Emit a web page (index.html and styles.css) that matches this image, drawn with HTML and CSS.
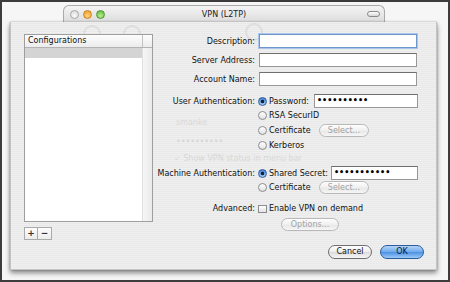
FILE: index.html
```html
<!DOCTYPE html>
<html lang="en">
<head>
    <meta charset="UTF-8">
    <title>VPN (L2TP)</title>
    <link rel="stylesheet" href="styles.css">
</head>
<body>
<div class="screen">

    <div class="titlebar">
        <div class="lights">
            <span class="light light-close"></span>
            <span class="light light-min"></span>
            <span class="light light-zoom"></span>
        </div>
        <div class="title">VPN (L2TP)</div>
        <span class="toolbar-pill"></span>
    </div>

    <div class="sheet">
        <!-- parent window content showing through the sheet -->
        <div class="ghost">
            <span class="ghost-icon ghost-icon-1"></span>
            <span class="ghost-icon ghost-icon-2"></span>
            <span class="ghost-icon ghost-icon-3"></span>
            <span class="ghost-text ghost-user">smanke</span>
            <span class="ghost-text ghost-pass">••••••••••</span>
            <span class="ghost-text ghost-check">✓ Show VPN status in menu bar</span>
        </div>

        <div class="side">
            <div class="list">
                <div class="list-head">
                    <span class="list-col">Configurations</span>
                    <span class="list-corner"></span>
                </div>
                <div class="list-body">
                    <div class="list-rows">
                        <div class="list-row selected"></div>
                    </div>
                    <div class="list-scroll"></div>
                </div>
            </div>
            <div class="list-buttons">
                <button class="sq-btn">+</button>
                <button class="sq-btn">−</button>
            </div>
        </div>

        <div class="form">
            <div class="row row-first">
                <span class="label">Description:</span>
                <span class="field focused"></span>
            </div>
            <div class="row row-next">
                <span class="label">Server Address:</span>
                <span class="field"></span>
            </div>
            <div class="row row-next">
                <span class="label">Account Name:</span>
                <span class="field"></span>
            </div>

            <div class="row row-group">
                <span class="label">User Authentication:</span>
                <span class="radio on"></span>
                <span class="opt opt-pass">Password:</span>
                <span class="field secret">••••••••••</span>
            </div>
            <div class="row row-radio">
                <span class="label"></span>
                <span class="radio"></span>
                <span class="opt">RSA SecurID</span>
            </div>
            <div class="row row-radio">
                <span class="label"></span>
                <span class="radio"></span>
                <span class="opt opt-cert">Certificate</span>
                <button class="pill-btn pill-select" disabled>Select...</button>
            </div>
            <div class="row row-radio">
                <span class="label"></span>
                <span class="radio"></span>
                <span class="opt">Kerberos</span>
            </div>

            <div class="row row-machine">
                <span class="label">Machine Authentication:</span>
                <span class="radio on"></span>
                <span class="opt opt-secret">Shared Secret:</span>
                <span class="field secret">•••••••••••</span>
            </div>
            <div class="row row-radio">
                <span class="label"></span>
                <span class="radio"></span>
                <span class="opt opt-cert">Certificate</span>
                <button class="pill-btn pill-select" disabled>Select...</button>
            </div>

            <div class="row row-advanced">
                <span class="label">Advanced:</span>
                <span class="checkbox"></span>
                <span class="opt">Enable VPN on demand</span>
            </div>
            <div class="row row-options">
                <span class="label"></span>
                <button class="pill-btn pill-options" disabled>Options...</button>
            </div>

            <div class="actions">
                <button class="push-btn">Cancel</button>
                <button class="push-btn default">OK</button>
            </div>
        </div>
    </div>

</div>
</body>
</html>
```

FILE: styles.css
```css
body {
    margin: 0;
    font-family: 'DejaVu Sans', 'Liberation Sans', sans-serif;
    font-size: 8px;
    color: #111;
}

.screen {
    width: 450px;
    height: 282px;
    box-sizing: border-box;
    border: 2px solid #3c3c3c;
    background: #f6f6f6;
    overflow: hidden;
}

/* parent window title bar */
.titlebar {
    display: grid;
    grid-template-columns: 1fr auto 1fr;
    align-items: center;
    margin: 3px 0 0 61px;
    width: 322px;
    height: 17px;
    box-sizing: border-box;
    border: 1px solid #a9a9a9;
    border-bottom: none;
    border-radius: 6px 6px 0 0;
    background: linear-gradient(#f4f4f4, #dcdcdc);
}

.lights {
    display: flex;
    gap: 4px;
    padding-left: 6px;
}

.light {
    width: 9px;
    height: 9px;
    box-sizing: border-box;
    border-radius: 50%;
}

.light-close {
    border: 1px solid #a8a8a8;
    background: radial-gradient(circle at 50% 70%, #fafafa, #d6d6d6);
}

.light-min {
    border: 1px solid #c7822a;
    background: radial-gradient(circle at 50% 70%, #ffd27a, #f0961c);
}

.light-zoom {
    border: 1px solid #4f9a35;
    background: radial-gradient(circle at 50% 70%, #b6ef8e, #56b233);
}

.title {
    font-size: 8px;
    color: #222;
}

.toolbar-pill {
    justify-self: end;
    margin-right: 4px;
    width: 13px;
    height: 6px;
    box-sizing: border-box;
    border: 1px solid #8a8a8a;
    border-radius: 4px;
    background: linear-gradient(#fff, #d8d8d8);
}

/* the sheet */
.sheet {
    position: relative;
    display: flex;
    margin-left: 8px;
    width: 427px;
    height: 248px;
    box-sizing: border-box;
    padding: 12px 12px 0 13px;
    background: repeating-linear-gradient(#efefef 0 1px, #e9e9e9 1px 2px);
    border: 1px solid #c4c4c4;
    border-top: none;
    box-shadow: 0 3px 5px rgba(0, 0, 0, 0.45), 0 0 2px rgba(0, 0, 0, 0.25);
}

.ghost {
    position: absolute;
    inset: 0;
    opacity: 0.09;
    pointer-events: none;
}

.ghost-icon {
    position: absolute;
    top: 3px;
    width: 14px;
    height: 14px;
    border: 2px solid #555;
    border-radius: 50%;
}

.ghost-icon-1 { left: 72px; }
.ghost-icon-2 { left: 112px; }
.ghost-icon-3 { left: 234px; top: 1px; }

.ghost-text {
    position: absolute;
    color: #000;
}

.ghost-user { left: 165px; top: 96px; }
.ghost-pass { left: 165px; top: 115px; }
.ghost-check { left: 163px; top: 132px; }

/* configurations list */
.side {
    position: relative;
    width: 129px;
    flex-shrink: 0;
}

.list {
    height: 188px;
    box-sizing: border-box;
    border: 1px solid #9e9e9e;
    background: #fff;
    display: flex;
    flex-direction: column;
}

.list-head {
    display: flex;
    height: 12px;
    border-bottom: 1px solid #b3b3b3;
    background: linear-gradient(#fdfdfd, #ececec);
}

.list-col {
    flex: 1;
    padding-left: 3px;
    line-height: 12px;
    border-right: 1px solid #c2c2c2;
}

.list-corner {
    width: 9px;
}

.list-body {
    flex: 1;
    display: flex;
}

.list-rows {
    flex: 1;
}

.list-row {
    height: 10px;
}

.list-row.selected {
    background: #d4d4d4;
}

.list-scroll {
    width: 9px;
    border-left: 1px solid #e0e0e0;
    background: linear-gradient(90deg, #f6f6f6, #eaeaea);
}

.list-buttons {
    display: flex;
    margin-top: 5px;
}

.sq-btn {
    width: 14px;
    height: 13px;
    padding: 0;
    border: 1px solid #aaa;
    background: linear-gradient(#fdfdfd, #ececec);
    font-family: 'DejaVu Sans', sans-serif;
    font-size: 9px;
    font-weight: bold;
    line-height: 11px;
    color: #333;
}

.sq-btn + .sq-btn {
    border-left: none;
}

/* form */
.form {
    position: relative;
    flex: 1;
    display: flex;
    flex-direction: column;
}

.row {
    display: flex;
    align-items: center;
    height: 14px;
}

.row-next { margin-top: 5px; }
.row-group { margin-top: 8px; }
.row-radio { height: 15px; }
.row-machine { margin-top: 13px; }
.row-advanced { margin-top: 6px; height: 15px; }
.row-options { margin-top: 1px; height: 15px; }

.label {
    width: 105px;
    flex-shrink: 0;
    padding-right: 3px;
    box-sizing: border-box;
    text-align: right;
    white-space: nowrap;
}

.field {
    width: 158px;
    height: 14px;
    box-sizing: border-box;
    margin-left: 1px;
    border: 1px solid #979797;
    border-top-color: #6f6f6f;
    background: #fff;
}

.field.focused {
    border-color: #6e98cc;
    box-shadow: 0 0 0 1px #a9c6ea;
}

.field.secret {
    flex: 1;
    width: auto;
    margin: 0 6px 0 0;
    padding-left: 2px;
    line-height: 12px;
    font-size: 8px;
    font-weight: bold;
    color: #000;
}

.radio {
    width: 9px;
    height: 9px;
    flex-shrink: 0;
    box-sizing: border-box;
    border-radius: 50%;
    border: 1px solid #8c8c8c;
    background: linear-gradient(#ffffff, #e2e2e2);
}

.radio.on {
    border-color: #2f5d9d;
    background: radial-gradient(circle, #13233a 0 1.6px, transparent 2.1px),
                linear-gradient(#3f80d8, #a9d1f6);
}

.opt {
    padding-left: 2px;
    white-space: nowrap;
}

.opt-pass { width: 45px; flex-shrink: 0; }
.opt-secret { width: 62px; flex-shrink: 0; }
.opt-cert { width: 50px; flex-shrink: 0; }

.checkbox {
    width: 9px;
    height: 8px;
    flex-shrink: 0;
    box-sizing: border-box;
    border: 1px solid #8c8c8c;
    background: linear-gradient(#ffffff, #e2e2e2);
}

.pill-btn {
    height: 13px;
    padding: 0;
    border: 1px solid #b9b9b9;
    border-radius: 7px;
    background: linear-gradient(#fefefe, #efefef 50%, #e6e6e6 50%, #f6f6f6);
    font-family: 'DejaVu Sans', sans-serif;
    font-size: 8px;
    line-height: 11px;
    color: #a3a3a3;
}

.pill-select { width: 50px; }

.pill-options {
    width: 58px;
    margin-left: 23px;
}

.actions {
    display: flex;
    justify-content: flex-end;
    gap: 8px;
    margin-top: 13px;
}

.push-btn {
    width: 44px;
    height: 14px;
    padding: 0;
    border: 1px solid #6e6e6e;
    border-radius: 7px;
    background: linear-gradient(#ffffff, #ececec 50%, #dadada 50%, #f7f7f7);
    font-family: 'DejaVu Sans', sans-serif;
    font-size: 8px;
    line-height: 12px;
    color: #111;
}

.push-btn.default {
    border-color: #2d5c9c;
    background: linear-gradient(#b3d5f8, #6ea8ea 50%, #4a8ee3 50%, #9acaf8);
    color: #0c1a30;
}
```
